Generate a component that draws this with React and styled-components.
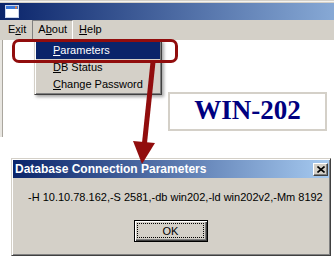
import styled, { createGlobalStyle } from "styled-components";

const GlobalStyle = createGlobalStyle`
  html, body {
    margin: 0;
    padding: 0;
    background: #ffffff;
  }
  body {
    font-family: "Liberation Sans", Arial, sans-serif;
    font-size: 11px;
    color: #000000;
  }
`;

const Page = styled.div`
  position: relative;
  width: 334px;
  height: 257px;
  overflow: hidden;
  background: #ffffff;
`;

const MainWindow = styled.div`
  position: relative;
  padding-top: 3px;
  background: linear-gradient(#d4d0c8 0 1px, #f4f3ef 1px 2px, #d4d0c8 2px 3px);
`;

const TitleBar = styled.div`
  height: 17px;
  display: flex;
  align-items: center;
  padding-left: 5px;
  background: linear-gradient(90deg, #0a246a 0%, #a6caf0 125%);
`;

const MenuBar = styled.div`
  height: 20px;
  display: flex;
  align-items: flex-end;
  padding-left: 2px;
  background: #d4d0c8;
`;

const MenuBarItem = styled.div`
  height: 18px;
  line-height: 16px;
  padding: 0 5px;
  border: 1px solid transparent;
  border-color: ${({ $open }) =>
    $open ? "#808080 #ffffff #ffffff #808080" : "transparent"};
`;

const Key = styled.span`
  text-decoration: underline;
`;

const Client = styled.div`
  height: 97px;
  box-sizing: border-box;
  border-left: 2px solid #e8e6e1;
  box-shadow: inset 1px 0 0 #aaa69e;
  background: #ffffff;
  padding: 52px 0 0 166px;
`;

const Badge = styled.div`
  width: 159px;
  height: 39px;
  box-sizing: border-box;
  border: 2px solid #d4d0c8;
  display: flex;
  align-items: center;
  justify-content: center;
  padding-bottom: 3px;
  font-family: "Liberation Serif", "Times New Roman", serif;
  font-weight: 700;
  font-size: 27px;
  color: #000080;
`;

const Dropdown = styled.div`
  position: absolute;
  left: 34px;
  top: 40px;
  width: 128px;
  box-sizing: border-box;
  padding: 1px 0;
  background: #d4d0c8;
  border: 1px solid;
  border-color: #d4d0c8 #404040 #404040 #d4d0c8;
  box-shadow: inset 1px 1px 0 #ffffff, inset -1px -1px 0 #808080,
    2px 2px 3px rgba(0, 0, 0, 0.35);
`;

const DropdownItem = styled.div`
  height: 17px;
  line-height: 17px;
  margin: 0 1px;
  padding-left: 17px;
  background: ${({ $active }) => ($active ? "#0a246a" : "transparent")};
  color: ${({ $active }) => ($active ? "#ffffff" : "#000000")};
`;

const Dialog = styled.div`
  margin: 21px 0 0 11px;
  width: 320px;
  height: 98px;
  box-sizing: border-box;
  padding: 1px;
  background: #d4d0c8;
  border: 1px solid;
  border-color: #d4d0c8 #404040 #404040 #d4d0c8;
  box-shadow: inset 1px 1px 0 #ffffff, inset -1px -1px 0 #808080;
`;

const DialogTitle = styled.div`
  height: 18px;
  display: flex;
  align-items: center;
  justify-content: space-between;
  padding: 0 1px 0 2px;
  background: linear-gradient(90deg, #0a246a 0%, #a6caf0 100%);
  color: #ffffff;
  font-weight: 700;
  font-size: 12px;
`;

const CloseButton = styled.div`
  width: 15px;
  height: 13px;
  box-sizing: border-box;
  display: flex;
  align-items: center;
  justify-content: center;
  background: #d4d0c8;
  border: 1px solid;
  border-color: #ffffff #404040 #404040 #ffffff;
  box-shadow: inset -1px -1px 0 #808080;
`;

const Message = styled.div`
  margin-top: 13px;
  padding-left: 15px;
  line-height: 13px;
  white-space: nowrap;
`;

const ButtonRow = styled.div`
  margin-top: 16px;
  display: flex;
  justify-content: center;
`;

const OkButton = styled.div`
  width: 74px;
  height: 22px;
  box-sizing: border-box;
  display: flex;
  padding: 2px;
  background: #d4d0c8;
  border: 1px solid #000000;
  box-shadow: inset 1px 1px 0 #ffffff, inset -1px -1px 0 #404040,
    inset -2px -2px 0 #808080;
`;

const FocusRing = styled.div`
  flex: 1;
  display: flex;
  align-items: center;
  justify-content: center;
  border: 1px dotted #000000;
  margin-right: 1px;
  margin-bottom: 1px;
`;

const Callout = styled.div`
  position: absolute;
  left: 12px;
  top: 39px;
  width: 166px;
  height: 24px;
  box-sizing: border-box;
  border: 3px solid #910d0d;
  border-radius: 7px;
`;

const Overlay = styled.svg`
  position: absolute;
  left: 0;
  top: 0;
  pointer-events: none;
`;

const WindowIcon = () => (
  <svg width="14" height="13" viewBox="0 0 14 13">
    <rect x="0.5" y="0.5" width="13" height="12" fill="#ffffff" stroke="#c8d4ec" />
    <rect x="1" y="1" width="12" height="3" fill="#3a78d8" />
    <rect x="10" y="1.5" width="2" height="2" fill="#f07a2a" />
  </svg>
);

const CloseGlyph = () => (
  <svg width="8" height="7" viewBox="0 0 8 7">
    <path d="M0.5 0.5 L7.5 6.5 M7.5 0.5 L0.5 6.5" stroke="#000" strokeWidth="1.6" />
  </svg>
);

export default function App() {
  return (
    <Page>
      <GlobalStyle />
      <MainWindow>
        <TitleBar>
          <WindowIcon />
        </TitleBar>
        <MenuBar>
          <MenuBarItem>
            E<Key>x</Key>it
          </MenuBarItem>
          <MenuBarItem $open>
            A<Key>b</Key>out
          </MenuBarItem>
          <MenuBarItem>
            <Key>H</Key>elp
          </MenuBarItem>
        </MenuBar>
        <Client>
          <Badge>WIN-202</Badge>
        </Client>
        <Dropdown>
          <DropdownItem $active>
            <Key>P</Key>arameters
          </DropdownItem>
          <DropdownItem>
            <Key>D</Key>B Status
          </DropdownItem>
          <DropdownItem>
            <Key>C</Key>hange Password
          </DropdownItem>
        </Dropdown>
      </MainWindow>
      <Dialog>
        <DialogTitle>
          <span>Database Connection Parameters</span>
          <CloseButton>
            <CloseGlyph />
          </CloseButton>
        </DialogTitle>
        <Message>-H 10.10.78.162,-S 2581,-db win202,-ld win202v2,-Mm 8192</Message>
        <ButtonRow>
          <OkButton>
            <FocusRing>OK</FocusRing>
          </OkButton>
        </ButtonRow>
      </Dialog>
      <Callout />
      <Overlay width="334" height="257" viewBox="0 0 334 257">
        <line x1="153" y1="62" x2="144.5" y2="143" stroke="#910d0d" strokeWidth="5" />
        <polygon points="133,141 155,143 142,164" fill="#910d0d" />
      </Overlay>
    </Page>
  );
}
